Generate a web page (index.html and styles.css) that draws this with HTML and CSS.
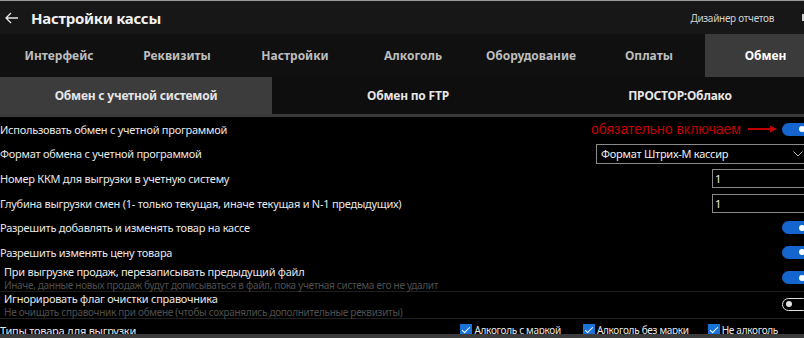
FILE: index.html
```html
<!DOCTYPE html>
<html lang="ru">
<head>
    <meta charset="UTF-8">
    <title>Настройки кассы</title>
    <link rel="stylesheet" href="styles.css">
</head>
<body>
    <header class="titlebar">
        <svg class="back" width="14" height="12" viewBox="0 0 14 12">
            <path d="M13 6H1.5M6 1L1 6l5 5" fill="none" stroke="#e6e6e6" stroke-width="1.3"/>
        </svg>
        <h1 class="title">Настройки кассы</h1>
        <span class="designer">Дизайнер отчетов</span>
        <span class="edge"></span>
    </header>

    <nav class="tabs">
        <div class="tab">Интерфейс</div>
        <div class="tab">Реквизиты</div>
        <div class="tab">Настройки</div>
        <div class="tab">Алкоголь</div>
        <div class="tab">Оборудование</div>
        <div class="tab">Оплаты</div>
        <div class="tab active">Обмен</div>
    </nav>

    <nav class="subtabs">
        <div class="subtab active">Обмен с учетной системой</div>
        <div class="subtab">Обмен по FTP</div>
        <div class="subtab">ПРОСТОР:Облако</div>
    </nav>

    <main class="settings">
        <div class="row">
            <span class="label">Использовать обмен с учетной программой</span>
            <div class="controls">
                <span class="note">обязательно включаем</span>
                <svg class="note-arrow" width="30" height="8" viewBox="0 0 30 8">
                    <path d="M0 4H24" stroke="#c00000" stroke-width="2"/>
                    <path d="M22 0.5L29 4l-7 3.5z" fill="#c00000"/>
                </svg>
                <span class="toggle on"></span>
            </div>
        </div>
        <div class="row">
            <span class="label">Формат обмена с учетной программой</span>
            <div class="select">
                <span>Формат Штрих-М кассир</span>
                <svg width="10" height="6" viewBox="0 0 10 6">
                    <path d="M0.5 0.5L5 5l4.5-4.5" fill="none" stroke="#bbb" stroke-width="1"/>
                </svg>
            </div>
        </div>
        <div class="row">
            <span class="label">Номер ККМ для выгрузки в учетную систему</span>
            <div class="input">1</div>
        </div>
        <div class="row">
            <span class="label">Глубина выгрузки смен (1- только текущая, иначе текущая и N-1 предыдущих)</span>
            <div class="input">1</div>
        </div>
        <div class="row">
            <span class="label">Разрешить добавлять и изменять товар на кассе</span>
            <span class="toggle on"></span>
        </div>
        <div class="row">
            <span class="label">Разрешить изменять цену товара</span>
            <span class="toggle on"></span>
        </div>
        <div class="row double">
            <div class="text">
                <span class="label">При выгрузке продаж, перезаписывать предыдущий файл</span>
                <span class="hint">Иначе, данные новых продаж будут дописываться в файл, пока учетная система его не удалит</span>
            </div>
            <span class="toggle on"></span>
        </div>
        <div class="row double">
            <div class="text">
                <span class="label">Игнорировать флаг очистки справочника</span>
                <span class="hint">Не очищать справочник при обмене (чтобы сохранялись дополнительные реквизиты)</span>
            </div>
            <span class="toggle"></span>
        </div>
        <div class="row last">
            <span class="label">Типы товара для выгрузки</span>
            <div class="checks">
                <label class="check"><span class="box"></span>Алкоголь с маркой</label>
                <label class="check"><span class="box"></span>Алкоголь без марки</label>
                <label class="check"><span class="box"></span>Не алкоголь</label>
            </div>
        </div>
    </main>

    <div class="bottom-bar"></div>
</body>
</html>
```

FILE: styles.css
```css
body {
    margin: 0;
    width: 804px;
    height: 338px;
    overflow: hidden;
    background-color: #000;
    color: #e8e8e8;
    font-family: "Noto Sans", sans-serif;
}

.titlebar {
    display: flex;
    align-items: center;
    height: 33px;
    border-top: 1px solid #9a9a9a;
    background-color: #171717;
}

.back {
    margin-left: 5px;
    margin-right: 12px;
}

.title {
    margin: 0;
    font-size: 15px;
    font-weight: 700;
    letter-spacing: -0.3px;
    color: #f0f0f0;
    flex: 1;
}

.designer {
    font-size: 10px;
    letter-spacing: -0.3px;
    color: #cfcfcf;
    margin-right: 28px;
}

.edge {
    width: 2px;
    height: 7px;
    background-color: #cfcfcf;
}

.tabs {
    display: grid;
    grid-template-columns: repeat(7, 118px);
    height: 43px;
    background-color: #101010;
}

.tab {
    display: flex;
    align-items: center;
    justify-content: center;
    font-size: 12px;
    font-weight: 700;
    color: #bdbdbd;
}

.tab.active {
    background-color: #3b3b3b;
    color: #fff;
    margin-left: -3px;
}

.subtabs {
    display: grid;
    grid-template-columns: 272px 272px 272px;
    height: 37px;
    background-color: #0e0e0e;
    border-bottom: 3px solid #3a3a3a;
}

.subtab {
    display: flex;
    align-items: center;
    justify-content: center;
    font-size: 12px;
    font-weight: 700;
    letter-spacing: -0.2px;
    color: #e6e6e6;
}

.subtab.active {
    background-color: #3c3c3c;
}

.settings {
    width: 810px;
    font-size: 11px;
    letter-spacing: -0.25px;
}

.row {
    display: flex;
    align-items: center;
    justify-content: space-between;
    height: 24.6px;
}

.row.double {
    height: 26px;
    border-bottom: 1px solid #1e1e1e;
    padding-left: 4px;
}

.text {
    display: flex;
    flex-direction: column;
}

.text .label {
    line-height: 14px;
}

.hint {
    font-size: 10px;
    line-height: 12px;
    letter-spacing: -0.3px;
    color: #4e4e4e;
}

.controls {
    display: flex;
    align-items: center;
}

.note {
    font-family: "Liberation Sans", sans-serif;
    font-size: 14px;
    letter-spacing: 0;
    color: #c00000;
    margin-right: 7px;
}

.note-arrow {
    margin-right: 4px;
}

.toggle {
    position: relative;
    box-sizing: border-box;
    width: 28px;
    height: 13px;
    border-radius: 7px;
    border: 1.5px solid #e0e0e0;
}

.toggle::after {
    content: "";
    position: absolute;
    top: 2px;
    left: 3px;
    width: 6px;
    height: 6px;
    border-radius: 50%;
    background-color: #e0e0e0;
}

.toggle.on {
    border: none;
    background-color: #1565cf;
}

.toggle.on::after {
    top: 3.5px;
    left: auto;
    right: 5px;
    background-color: #fff;
}

.select {
    display: flex;
    align-items: center;
    justify-content: space-between;
    box-sizing: border-box;
    width: 214px;
    height: 20px;
    padding: 0 6px 0 4px;
    border: 1px solid #8a8a8a;
    color: #f0f0f0;
}

.input {
    box-sizing: border-box;
    width: 98px;
    height: 19px;
    padding-left: 2px;
    border: 1px solid #8a8a8a;
    line-height: 17px;
    color: #f0f0f0;
}

.row.last {
    align-items: flex-start;
    padding-top: 4px;
}

.checks {
    display: flex;
    gap: 19px;
    margin-right: 32px;
}

.check {
    display: flex;
    align-items: center;
    gap: 2px;
    font-size: 10px;
    letter-spacing: -0.3px;
}

.check:first-child {
    margin-right: 3px;
}

.box {
    position: relative;
    width: 12px;
    height: 12px;
    background-color: #1a73d9;
}

.box::after {
    content: "";
    position: absolute;
    left: 4px;
    top: 1px;
    width: 3px;
    height: 7px;
    border: solid #fff;
    border-width: 0 1.5px 1.5px 0;
    transform: rotate(45deg);
}

.bottom-bar {
    position: fixed;
    left: 0;
    right: 0;
    bottom: 0;
    height: 4px;
    background-color: #3c3c3c;
}
```
